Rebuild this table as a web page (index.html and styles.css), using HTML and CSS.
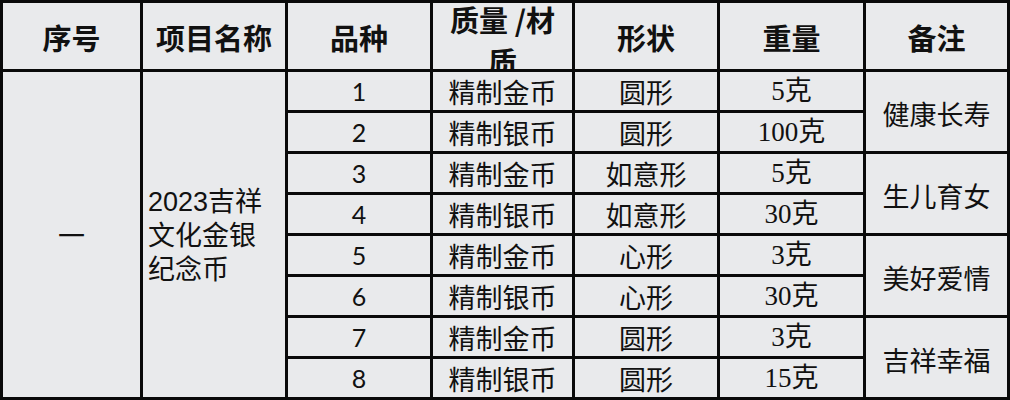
FILE: index.html
```html
<!DOCTYPE html>
<html lang="zh">
<head>
<meta charset="utf-8">
<link rel="stylesheet" href="styles.css">
</head>
<body>
<div class="sheet">
  <div class="cell head">序号</div>
  <div class="cell head">项目名称</div>
  <div class="cell head">品种</div>
  <div class="cell head wrap"><div class="clip">质量 /材<br>质</div></div>
  <div class="cell head">形状</div>
  <div class="cell head">重量</div>
  <div class="cell head">备注</div>

  <div class="cell tall">一</div>
  <div class="cell tall name">2023吉祥<br>文化金银<br>纪念币</div>

  <div class="cell num">1</div><div class="cell">精制金币</div><div class="cell">圆形</div><div class="cell wt">5克</div><div class="cell pair">健康长寿</div>
  <div class="cell num">2</div><div class="cell">精制银币</div><div class="cell">圆形</div><div class="cell wt">100克</div>
  <div class="cell num">3</div><div class="cell">精制金币</div><div class="cell">如意形</div><div class="cell wt">5克</div><div class="cell pair">生儿育女</div>
  <div class="cell num">4</div><div class="cell">精制银币</div><div class="cell">如意形</div><div class="cell wt">30克</div>
  <div class="cell num">5</div><div class="cell">精制金币</div><div class="cell">心形</div><div class="cell wt">3克</div><div class="cell pair">美好爱情</div>
  <div class="cell num">6</div><div class="cell">精制银币</div><div class="cell">心形</div><div class="cell wt">30克</div>
  <div class="cell num">7</div><div class="cell">精制金币</div><div class="cell">圆形</div><div class="cell wt">3克</div><div class="cell pair">吉祥幸福</div>
  <div class="cell num">8</div><div class="cell">精制银币</div><div class="cell">圆形</div><div class="cell wt">15克</div>
</div>
</body>
</html>
```

FILE: styles.css
```css
html, body {
  margin: 0;
  padding: 0;
  background: #e9eaec;
}

.sheet {
  width: 1010px;
  height: 400px;
  box-sizing: border-box;
  background: #0a0a0a;
  padding: 3px;
  display: grid;
  grid-template-columns: 137px 142px 142px 139px 142px 143px 141px;
  grid-template-rows: 66px repeat(8, 38px);
  gap: 3px;
  font-family: "Noto Sans CJK SC", sans-serif;
  color: #111;
}

.cell {
  background: #e9eaec;
  display: flex;
  align-items: center;
  justify-content: center;
  font-size: 27px;
  line-height: 1;
  white-space: nowrap;
  overflow: hidden;
}

.head {
  font-weight: 700;
  font-size: 29px;
  padding-top: 3px;
  box-sizing: border-box;
}

.head.wrap {
  padding-top: 0;
  align-items: flex-start;
}

.clip {
  line-height: 42px;
  margin-top: -5px;
  text-align: center;
}

.tall {
  grid-row: span 8;
}

.name {
  justify-content: flex-start;
  padding-left: 5px;
  line-height: 34px;
  font-family: "Liberation Sans", "Noto Sans CJK SC", sans-serif;
  font-size: 27px;
  padding-top: 3px;
  box-sizing: border-box;
}

.num {
  font-family: Lato, "Noto Sans CJK SC", sans-serif;
  font-size: 25px;
}

.wt {
  font-family: "Liberation Serif", "Noto Sans CJK SC", serif;
  font-size: 27px;
}

.pair {
  grid-row: span 2;
  font-size: 27px;
  padding-top: 4px;
  box-sizing: border-box;
}
```
